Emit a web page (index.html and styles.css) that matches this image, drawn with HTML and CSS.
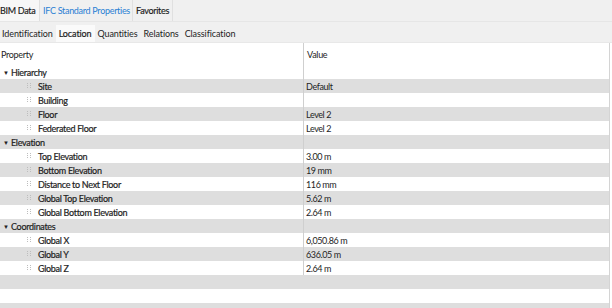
FILE: index.html
```html
<!DOCTYPE html>
<html>
<head>
<meta charset="utf-8">
<link rel="stylesheet" href="styles.css">
</head>
<body>
<div class="panel">
  <div class="tabs-main">
    <div class="tab-main active">BIM Data</div>
    <div class="tab-main link">IFC Standard Properties</div>
    <div class="tab-main fav">Favorites</div>
  </div>
  <div class="tabs-sub">
    <div class="tab-sub">Identification</div>
    <div class="tab-sub active">Location</div>
    <div class="tab-sub">Quantities</div>
    <div class="tab-sub">Relations</div>
    <div class="tab-sub">Classification</div>
  </div>
  <div class="grid">
    <div class="row head"><div class="c1">Property</div><div class="c2">Value</div></div>

    <div class="row group"><div class="c1"><span class="tri">&#9660;</span>Hierarchy</div><div class="c2"></div></div>
    <div class="row alt"><div class="c1"><span class="grip"></span>Site</div><div class="c2">Default</div></div>
    <div class="row"><div class="c1"><span class="grip"></span>Building</div><div class="c2"></div></div>
    <div class="row alt"><div class="c1"><span class="grip"></span>Floor</div><div class="c2">Level 2</div></div>
    <div class="row"><div class="c1"><span class="grip"></span>Federated Floor</div><div class="c2">Level 2</div></div>

    <div class="row alt group"><div class="c1"><span class="tri">&#9660;</span>Elevation</div><div class="c2"></div></div>
    <div class="row"><div class="c1"><span class="grip"></span>Top Elevation</div><div class="c2">3.00 m</div></div>
    <div class="row alt"><div class="c1"><span class="grip"></span>Bottom Elevation</div><div class="c2">19 mm</div></div>
    <div class="row"><div class="c1"><span class="grip"></span>Distance to Next Floor</div><div class="c2">116 mm</div></div>
    <div class="row alt"><div class="c1"><span class="grip"></span>Global Top Elevation</div><div class="c2">5.62 m</div></div>
    <div class="row"><div class="c1"><span class="grip"></span>Global Bottom Elevation</div><div class="c2">2.64 m</div></div>

    <div class="row alt group"><div class="c1"><span class="tri">&#9660;</span>Coordinates</div><div class="c2"></div></div>
    <div class="row"><div class="c1"><span class="grip"></span>Global X</div><div class="c2">6,050.86 m</div></div>
    <div class="row alt"><div class="c1"><span class="grip"></span>Global Y</div><div class="c2">636.05 m</div></div>
    <div class="row"><div class="c1"><span class="grip"></span>Global Z</div><div class="c2">2.64 m</div></div>

    <div class="row alt empty"></div>
    <div class="row empty"></div>
    <div class="row alt empty"></div>
  </div>
</div>
</body>
</html>
```
FILE: styles.css
```css
* { box-sizing: border-box; }
html, body { margin: 0; padding: 0; }
body {
  width: 612px;
  height: 308px;
  overflow: hidden;
  background: #ffffff;
  font-family: "Lato", "Open Sans", sans-serif;
  font-size: 9px;
  letter-spacing: -0.3px;
  color: #1e1e1e;
}
.panel { display: flex; flex-direction: column; }
.tabs-main {
  display: flex;
  height: 22px;
  background: #f0f0f0;
  border-bottom: 1px solid #e6e6e6;
}
.tab-main {
  display: flex;
  align-items: center;
  flex: none;
  white-space: nowrap;
  border-right: 1px solid #e0e0e0;
  color: #1a1a1a;
  -webkit-text-stroke: 0.15px #1a1a1a;
}
.tab-main.active { background: #f7f7f7; padding-left: 0; width: 40px; }
.tab-main.link {
  color: #2a7fd4;
  -webkit-text-stroke: 0;
  width: 93px;
  padding-left: 3px;
}
.tab-main.fav { width: 40px; padding-left: 3px; }
.tabs-sub {
  display: flex;
  height: 21px;
  padding-top: 3px;
  padding-left: 0;
  background: #f0f0f0;
  border-bottom: 1px solid #e8e8e8;
}
.tab-sub {
  display: flex;
  align-items: center;
  white-space: nowrap;
  padding: 0 3px;
  letter-spacing: -0.1px;
}
.tab-sub:first-child { padding-left: 2px; }
.tab-sub.active { background: #fafafa; -webkit-text-stroke: 0.2px #1e1e1e; }
.grid {
  display: flex;
  flex-direction: column;
  border-right: 1px solid #d4d4d4;
  margin-right: 2px;
}
.row {
  display: flex;
  height: 14px;
  align-items: center;
  background: #ffffff;
}
.row.alt { background: #dedede; }
.row.head { height: 22px; }
.c1 {
  width: 304px;
  flex: none;
  display: flex;
  align-items: center;
  padding-left: 38px;
  height: 100%;
  border-right: 1px solid #cfcfcf;
  white-space: nowrap;
  -webkit-text-stroke: 0.2px #1e1e1e;
  position: relative;
}
.c2 {
  flex: 1;
  padding-left: 2px;
  display: flex;
  align-items: center;
  height: 100%;
  white-space: nowrap;
  letter-spacing: -0.4px;
}
.head .c1 { padding-left: 1px; -webkit-text-stroke: 0; }
.head .c2 { padding-left: 3px; letter-spacing: -0.3px; }
.group .c1 { padding-left: 11px; }
.tri {
  position: absolute;
  left: 3px;
  font-size: 6px;
  top: 4px;
  color: #222;
  -webkit-text-stroke: 0;
}
.grip {
  position: absolute;
  left: 27px;
  top: 4px;
  width: 1px;
  height: 1px;
  background: #bdbdbd;
  box-shadow: 3px 0 #bdbdbd, 0 2px #bdbdbd, 3px 2px #bdbdbd, 0 4px #bdbdbd, 3px 4px #bdbdbd;
}
```
